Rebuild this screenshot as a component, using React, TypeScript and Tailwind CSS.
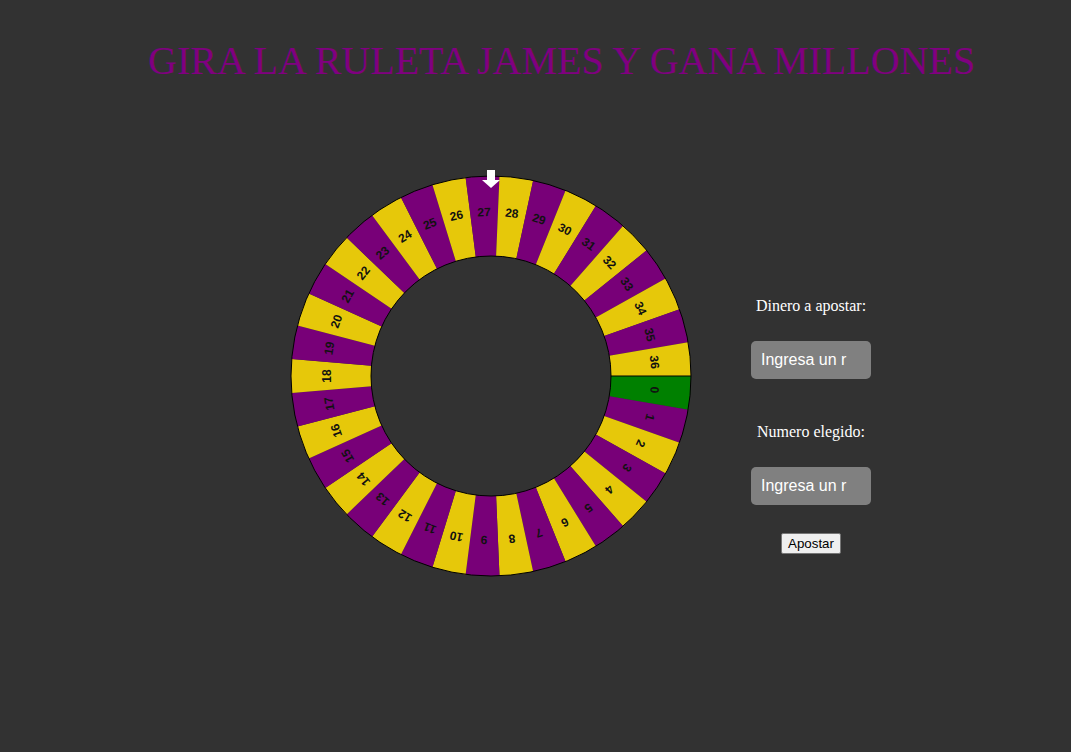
import React from "react";

const N = 37;
const CX = 200;
const CY = 210;
const R_OUT = 200;
const R_IN = 120;
const R_TXT = 164;

function pt(r: number, deg: number) {
  const a = (deg * Math.PI) / 180;
  return [CX + r * Math.cos(a), CY + r * Math.sin(a)];
}

function segPath(i: number) {
  const step = 360 / N;
  const a0 = i * step;
  const a1 = (i + 1) * step;
  const [x0, y0] = pt(R_OUT, a0);
  const [x1, y1] = pt(R_OUT, a1);
  const [x2, y2] = pt(R_IN, a1);
  const [x3, y3] = pt(R_IN, a0);
  return `M${x0} ${y0} A${R_OUT} ${R_OUT} 0 0 1 ${x1} ${y1} L${x2} ${y2} A${R_IN} ${R_IN} 0 0 0 ${x3} ${y3} Z`;
}

function colorFor(i: number) {
  if (i === 0) return "#008000";
  return i % 2 === 1 ? "#780078" : "#e6c80a";
}

function Ruleta() {
  const step = 360 / N;
  return (
    <svg width="400" height="411" viewBox="0 0 400 411" className="shrink-0 overflow-visible">
      {Array.from({ length: N }).map((_, i) => (
        <path key={i} d={segPath(i)} fill={colorFor(i)} />
      ))}
      {Array.from({ length: N }).map((_, i) => {
        const mid = (i + 0.5) * step;
        const [x, y] = pt(R_TXT, mid);
        return (
          <text
            key={"t" + i}
            x={x}
            y={y}
            fill="#111"
            fontSize="12"
            fontWeight="bold"
            fontFamily="'Liberation Sans', Arial, sans-serif"
            textAnchor="middle"
            dominantBaseline="central"
            transform={`rotate(${mid + 90} ${x} ${y})`}
          >
            {i}
          </text>
        );
      })}
      <circle cx={CX} cy={CY} r={R_OUT} fill="none" stroke="#000" strokeWidth="1" />
      <circle cx={CX} cy={CY} r={R_IN} fill="none" stroke="#000" strokeWidth="1" />
      <line x1={CX + R_IN} y1={CY} x2={CX + R_OUT} y2={CY} stroke="#000" strokeWidth="1" />
      {/* flecha */}
      <rect x="196" y="4" width="8" height="10" fill="#fff" />
      <polygon points="191,14 209,14 200,22" fill="#fff" />
    </svg>
  );
}

export default function App() {
  return (
    <div className="min-h-[752px] w-full bg-[#323232] font-['Liberation_Serif',serif]">
      <h1 className="pt-[41px] pl-[148px] text-[40px] leading-none font-normal text-[#800080] whitespace-nowrap">
        GIRA LA RULETA JAMES Y GANA MILLONES
      </h1>

      <div className="mt-[85px] flex items-start pl-[291px]">
        <Ruleta />

        <div className="ml-[60px] mt-[131px] flex w-[120px] flex-col items-center text-white">
          <label className="text-[16px] leading-[18px] whitespace-nowrap">Dinero a apostar:</label>
          <input
            type="text"
            placeholder="Ingresa un r"
            className="mt-[26px] h-[38px] w-[120px] rounded-[5px] bg-[#808080] pl-[10px] pr-[24px] font-['Liberation_Sans',Arial,sans-serif] text-[16px] text-white placeholder:text-white outline-none"
          />

          <label className="mt-[44px] text-[16px] leading-[18px] whitespace-nowrap">Numero elegido:</label>
          <input
            type="text"
            placeholder="Ingresa un r"
            className="mt-[26px] h-[38px] w-[120px] rounded-[5px] bg-[#808080] pl-[10px] pr-[24px] font-['Liberation_Sans',Arial,sans-serif] text-[16px] text-white placeholder:text-white outline-none"
          />

          <button className="mt-[28px] h-[21px] rounded-[2px] border border-[#767676] bg-[#efefef] px-[6px] font-['Liberation_Sans',Arial,sans-serif] text-[13.33px] leading-none text-black">
            Apostar
          </button>
        </div>
      </div>
    </div>
  );
}
